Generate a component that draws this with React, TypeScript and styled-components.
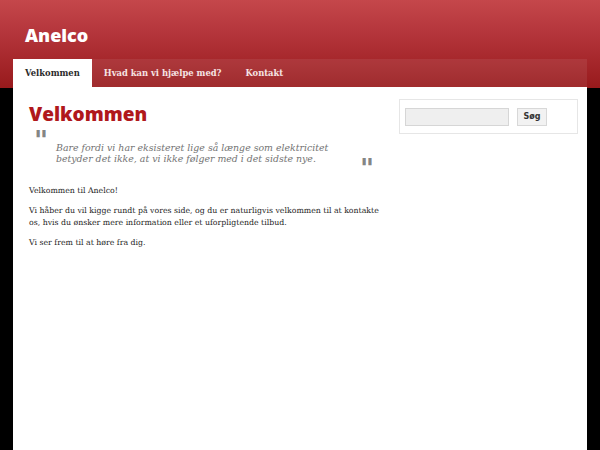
import styled, { createGlobalStyle } from 'styled-components'

const GlobalStyle = createGlobalStyle`
  html, body {
    margin: 0;
    padding: 0;
    background: #000;
  }
  body {
    font-family: "DejaVu Serif", serif;
  }
`

const Header = styled.header`
  background: linear-gradient(180deg, #c5474b 0%, #b3343a 40%, #981a1c 100%);
  height: 88px;
`

const Inner = styled.div`
  width: 574px;
  margin: 0 auto;
`

const Logo = styled.h1`
  margin: 0;
  height: 59px;
  box-sizing: border-box;
  padding: 24px 0 0 12px;
  font-family: "Open Sans", sans-serif;
  font-weight: 800;
  font-size: 18px;
  line-height: 22px;
  color: #fff;
`

const Nav = styled.nav`
  display: flex;
  height: 28px;
  background: rgba(255, 255, 255, 0.08);
`

const Tab = styled.a<{ $active?: boolean }>`
  display: flex;
  align-items: center;
  padding: 0 12px;
  font-family: "DejaVu Serif", serif;
  font-weight: 700;
  font-size: 8.4px;
  color: ${({ $active }) => ($active ? '#2a2a2a' : '#f6e4e4')};
  background: ${({ $active }) => ($active ? '#fff' : 'transparent')};
  text-decoration: none;
`

const Page = styled.main`
  width: 574px;
  margin: -1px auto 0;
  background: #fff;
  min-height: 363px;
  display: grid;
  grid-template-columns: 356px 179px;
  column-gap: 14px;
  padding: 12px 0 0 16px;
  box-sizing: border-box;
  align-items: start;
`

const Content = styled.section`
  color: #222;
`

const Title = styled.h2`
  margin: 0;
  font-family: "Open Sans", sans-serif;
  font-weight: 800;
  font-size: 19px;
  line-height: 30px;
  color: #b0181c;
`

const Quote = styled.blockquote`
  position: relative;
  margin: 0;
  padding: 13px 0 0 27px;
  font-family: "DejaVu Serif", serif;
  font-style: italic;
  font-size: 9.4px;
  line-height: 11px;
  color: #737373;

  &::before,
  &::after {
    position: absolute;
    font-family: "DejaVu Sans", sans-serif;
    font-style: normal;
    font-weight: 700;
    font-size: 27px;
    line-height: 27px;
    color: #858585;
  }
  &::before {
    content: '"';
    left: 5px;
    top: -2px;
  }
  &::after {
    content: '"';
    left: 331px;
    top: 26px;
  }
`

const Body = styled.div`
  padding-top: 21px;
  font-size: 7.8px;
  line-height: 12px;
  color: #1e1e1e;

  p {
    margin: 0 0 8px;
  }
`

const Sidebar = styled.aside`
  border: 1px solid #e6e6e6;
  height: 35px;
  box-sizing: border-box;
  display: flex;
  align-items: center;
  gap: 8px;
  padding: 0 5px;
`

const SearchInput = styled.input`
  width: 104px;
  height: 18px;
  box-sizing: border-box;
  border: 1px solid #d6d6d6;
  background: #efefef;
  padding: 0 4px;
  font-size: 9px;
`

const SearchButton = styled.button`
  height: 18px;
  width: 30px;
  box-sizing: border-box;
  border: 1px solid #d8d8d8;
  background: #f2f2f2;
  font-family: "DejaVu Sans", sans-serif;
  font-weight: 700;
  font-size: 8px;
  color: #333;
  padding: 0;
`

export default function App() {
  return (
    <>
      <GlobalStyle />
      <Header>
        <Inner>
          <Logo>Anelco</Logo>
          <Nav>
            <Tab href="#" $active>Velkommen</Tab>
            <Tab href="#">Hvad kan vi hjælpe med?</Tab>
            <Tab href="#">Kontakt</Tab>
          </Nav>
        </Inner>
      </Header>
      <Page>
        <Content>
          <Title>Velkommen</Title>
          <Quote>
            Bare fordi vi har eksisteret lige så længe som elektricitet
            <br />
            betyder det ikke, at vi ikke følger med i det sidste nye.
          </Quote>
          <Body>
            <p>Velkommen til Anelco!</p>
            <p>
              Vi håber du vil kigge rundt på vores side, og du er naturligvis velkommen til at kontakte
              os, hvis du ønsker mere information eller et uforpligtende tilbud.
            </p>
            <p>Vi ser frem til at høre fra dig.</p>
          </Body>
        </Content>
        <Sidebar>
          <SearchInput type="text" />
          <SearchButton type="button">Søg</SearchButton>
        </Sidebar>
      </Page>
    </>
  )
}
